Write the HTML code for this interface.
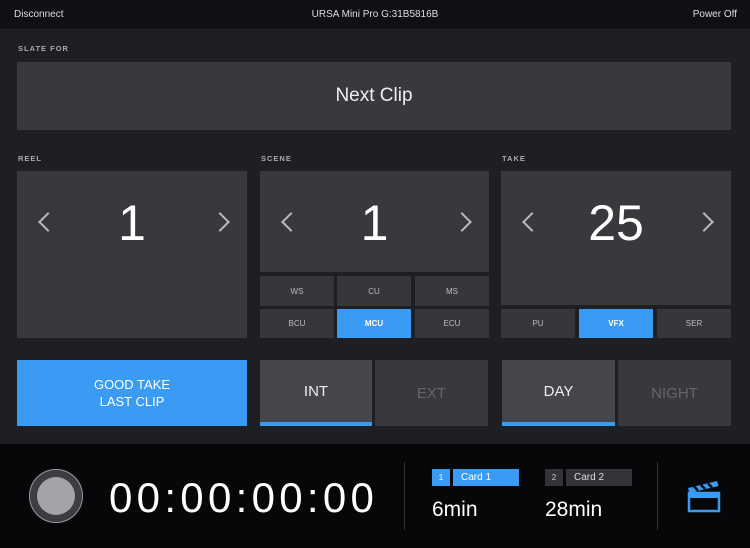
<!DOCTYPE html>
<html><head><style>
*{margin:0;padding:0;box-sizing:border-box}
body{width:750px;height:548px;background:#1e1f23;font-family:"Liberation Sans",sans-serif;color:#fff;position:relative;overflow:hidden}
.a{position:absolute}
.top{left:0;top:0;width:750px;height:29px;background:#0e1013;font-size:10px;color:#ddd}
.lbl{font-size:7.5px;font-weight:bold;color:#aaa;letter-spacing:1px}
.box{background:#38393d}
.num{position:absolute;left:0;right:0;top:22px;text-align:center;font-size:50px;line-height:60px;color:#fff}
.btn{background:#36373b;font-size:8px;color:#bbb;display:flex;align-items:center;justify-content:center}
.sel{background:#3a9bf5;color:#fff;font-weight:bold}
.arr{position:absolute;top:44px;width:14px;height:14px;border-left:2px solid #bbb;border-bottom:2px solid #bbb}
.l{transform:rotate(45deg)}.r{transform:rotate(-135deg)}
.tg{font-size:15px;display:flex;align-items:center;justify-content:center}
</style></head><body>
<div class="a top">
<span class="a" style="left:14px;top:9px">Disconnect</span>
<span class="a" style="left:0;width:750px;text-align:center;top:9px">URSA Mini Pro G:31B5816B</span>
<span class="a" style="right:13px;top:9px">Power Off</span>
</div>
<div class="a lbl" style="left:18px;top:44px">SLATE FOR</div>
<div class="a box" style="left:17px;top:62px;width:714px;height:68px;font-size:19px;color:#eee;display:flex;align-items:center;justify-content:center">Next Clip</div>
<div class="a lbl" style="left:18px;top:154px">REEL</div>
<div class="a lbl" style="left:261px;top:154px">SCENE</div>
<div class="a lbl" style="left:502px;top:154px">TAKE</div>
<div class="a box" style="left:17px;top:171px;width:230px;height:167px"><div class="num">1</div><i class="arr l" style="left:24px"></i><i class="arr r" style="right:20px"></i></div>
<div class="a box" style="left:260px;top:171px;width:229px;height:101px"><div class="num">1</div><i class="arr l" style="left:24px"></i><i class="arr r" style="right:20px"></i></div>
<div class="a box" style="left:501px;top:171px;width:230px;height:134px"><div class="num">25</div><i class="arr l" style="left:24px"></i><i class="arr r" style="right:20px"></i></div>
<div class="a btn" style="left:260px;top:276px;width:74px;height:30px">WS</div>
<div class="a btn" style="left:337px;top:276px;width:74px;height:30px">CU</div>
<div class="a btn" style="left:415px;top:276px;width:74px;height:30px">MS</div>
<div class="a btn" style="left:260px;top:309px;width:74px;height:29px">BCU</div>
<div class="a btn sel" style="left:337px;top:309px;width:74px;height:29px">MCU</div>
<div class="a btn" style="left:415px;top:309px;width:74px;height:29px">ECU</div>
<div class="a btn" style="left:501px;top:309px;width:74px;height:29px">PU</div>
<div class="a btn sel" style="left:579px;top:309px;width:74px;height:29px">VFX</div>
<div class="a btn" style="left:657px;top:309px;width:74px;height:29px">SER</div>
<div class="a sel tg" style="left:17px;top:360px;width:230px;height:66px;font-weight:normal;font-size:13px;text-align:center;line-height:17px">GOOD TAKE<br>LAST CLIP</div>
<div class="a tg" style="left:260px;top:360px;width:112px;height:66px;background:#45464b;color:#eee;border-bottom:4px solid #3a9bf5">INT</div>
<div class="a tg" style="left:375px;top:360px;width:113px;height:66px;background:#38393d;color:#666">EXT</div>
<div class="a tg" style="left:502px;top:360px;width:113px;height:66px;background:#45464b;color:#eee;border-bottom:4px solid #3a9bf5">DAY</div>
<div class="a tg" style="left:618px;top:360px;width:113px;height:66px;background:#38393d;color:#666">NIGHT</div>
<div class="a" style="left:0;top:444px;width:750px;height:104px;background:#060709"></div>
<div class="a" style="left:29px;top:469px;width:54px;height:54px;border-radius:50%;background:#3c3d42;border:1px solid #999"></div>
<div class="a" style="left:37px;top:477px;width:38px;height:38px;border-radius:50%;background:#a2a4a8"></div>
<div class="a" style="left:109px;top:474px;font-size:42px;letter-spacing:4.3px;color:#fff">00:00:00:00</div>
<div class="a" style="left:404px;top:462px;width:1px;height:68px;background:#333"></div>
<div class="a" style="left:657px;top:462px;width:1px;height:68px;background:#333"></div>
<div class="a" style="left:432px;top:469px;width:18px;height:17px;background:#3a9bf5;font-size:8px;text-align:center;line-height:17px">1</div>
<div class="a" style="left:453px;top:469px;width:66px;height:17px;background:#3a9bf5;font-size:10px;padding-left:8px;line-height:17px">Card 1</div>
<div class="a" style="left:545px;top:469px;width:18px;height:17px;background:#333438;font-size:8px;text-align:center;line-height:17px;color:#ccc">2</div>
<div class="a" style="left:566px;top:469px;width:66px;height:17px;background:#333438;font-size:10px;padding-left:8px;line-height:17px;color:#ddd">Card 2</div>
<div class="a" style="left:432px;top:498px;font-size:21px">6min</div>
<div class="a" style="left:545px;top:498px;font-size:21px">28min</div>
<svg class="a" style="left:686px;top:479px" width="38" height="36" viewBox="0 0 38 36">
<g fill="none" stroke="#3a9bf5" stroke-width="2.5"><rect x="3" y="14" width="30" height="18"/></g>
<rect x="3" y="14" width="30" height="5" fill="#3a9bf5"/>
<path d="M2 9 L31 2 L32.5 7 L3.5 14 Z" fill="#3a9bf5"/>
<path d="M8 7.5 L12 11.5 M15 6 L19 10 M22 4.5 L26 8.5" stroke="#060709" stroke-width="2.5"/>
</svg>
</body></html>
